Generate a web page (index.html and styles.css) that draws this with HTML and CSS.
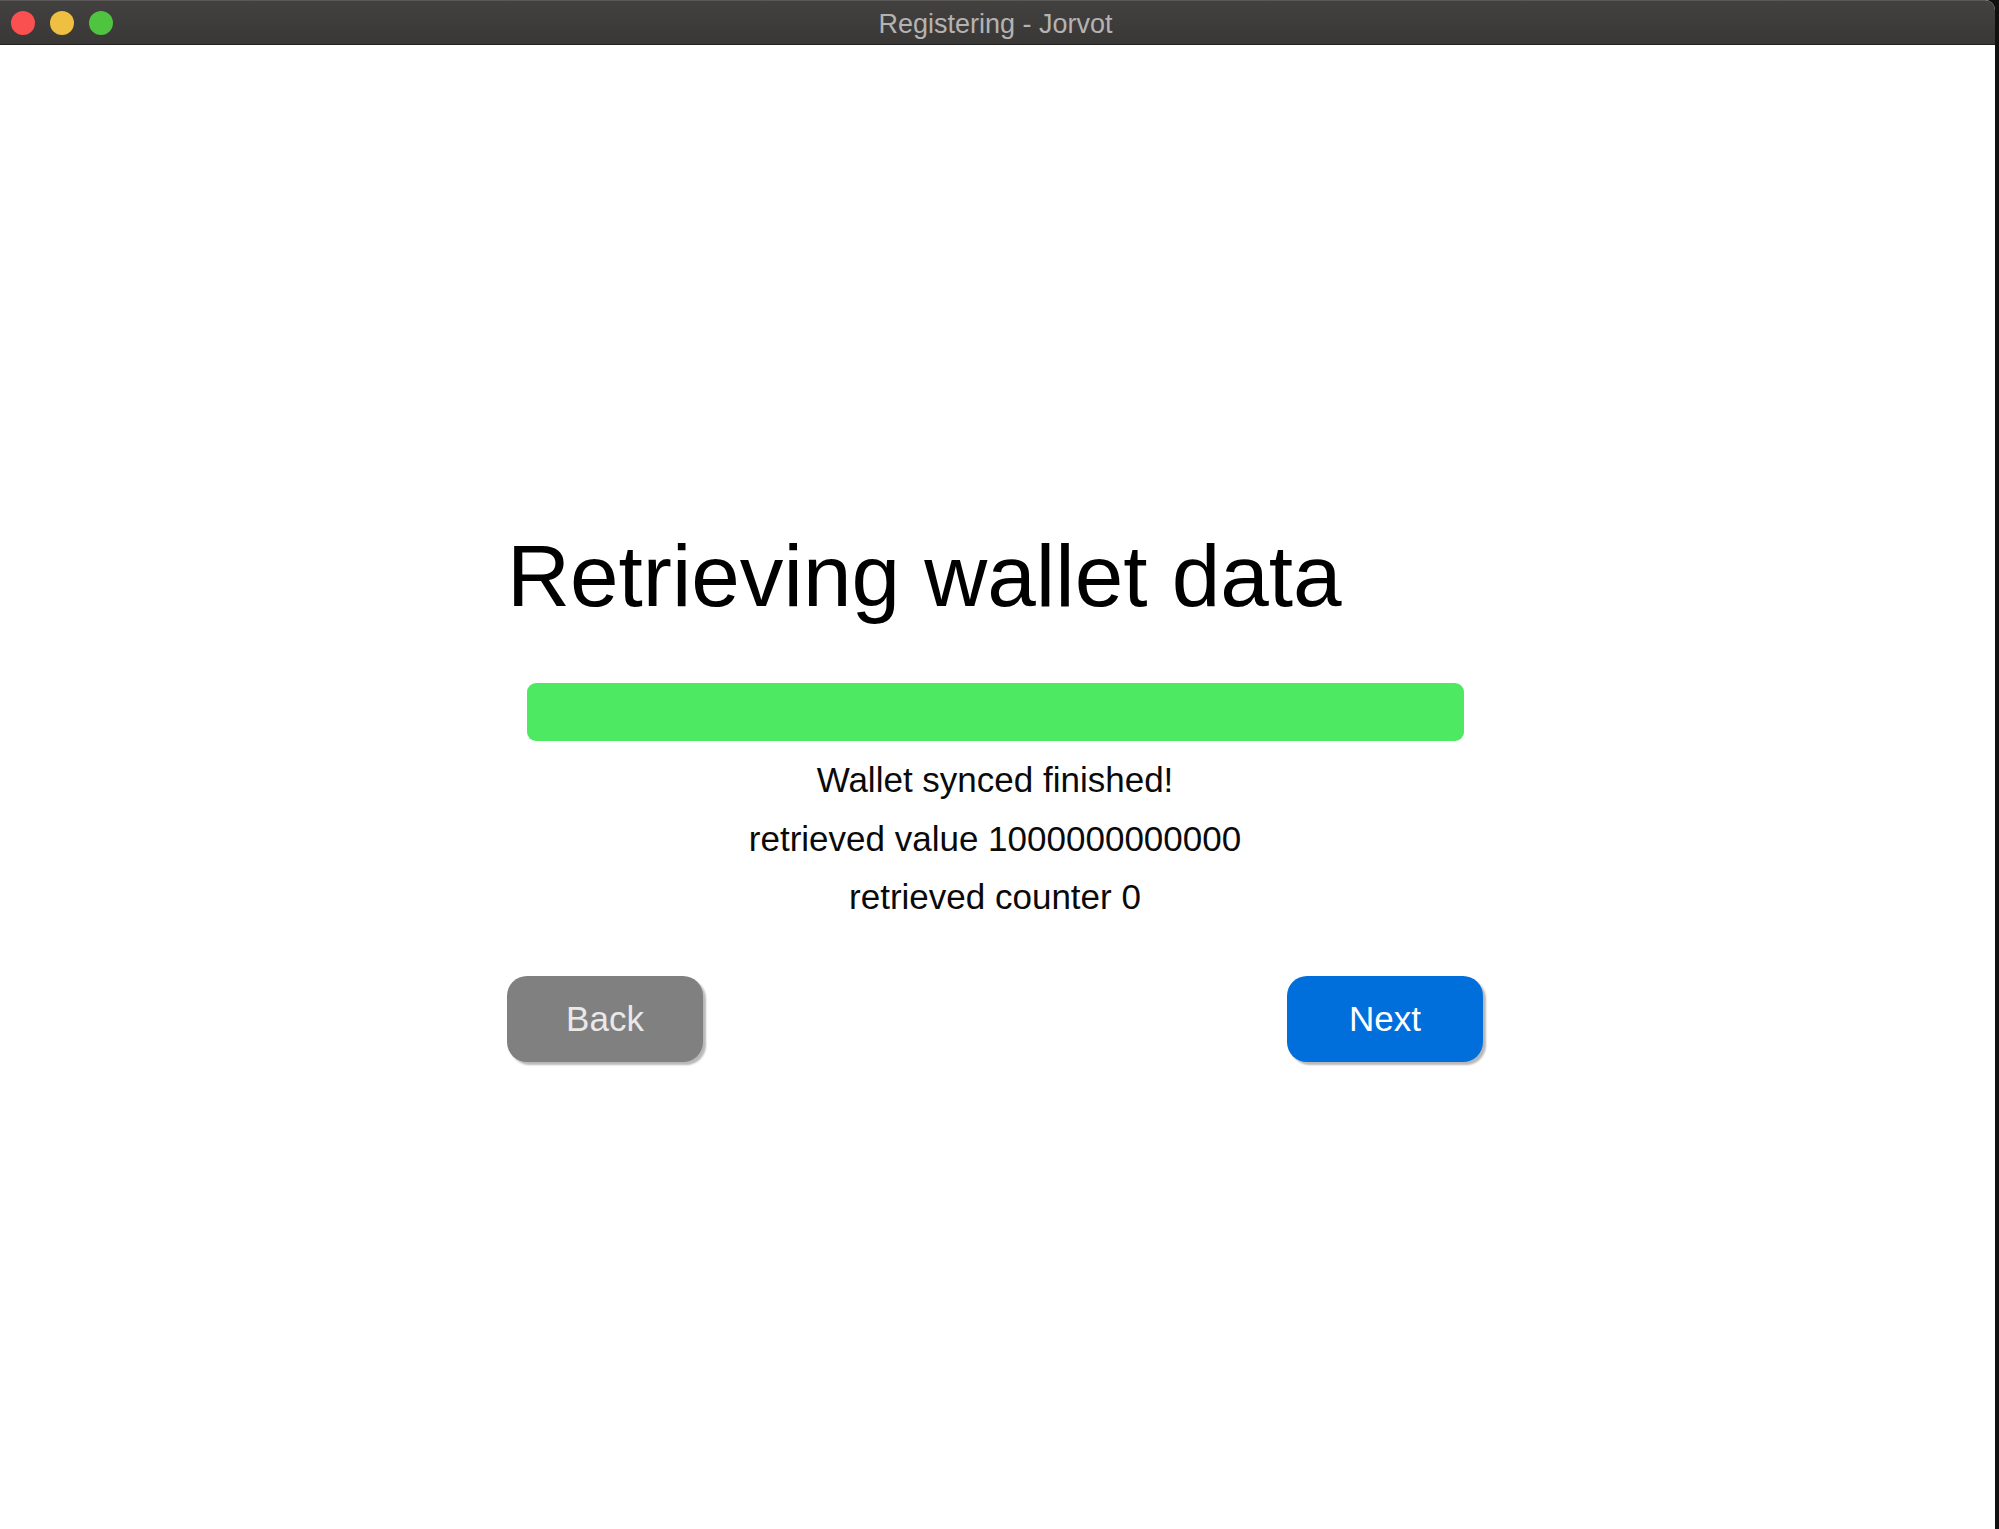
FILE: index.html
```html
<!DOCTYPE html>
<html>
<head>
<meta charset="utf-8">
<title>Registering - Jorvot</title>
<link rel="stylesheet" href="styles.css">
</head>
<body>
<div class="screen">
  <div class="window">
    <header class="titlebar">
      <div class="lights">
        <span class="light red"></span>
        <span class="light yellow"></span>
        <span class="light green"></span>
      </div>
      <div class="title">Registering - Jorvot</div>
    </header>
    <main class="content">
      <section class="column">
        <h1 class="heading">Retrieving wallet data</h1>
        <div class="progress"><div class="progress-fill" style="width:100%"></div></div>
        <div class="status">
          <p class="line">Wallet synced finished!</p>
          <p class="line">retrieved value 1000000000000</p>
          <p class="line">retrieved counter 0</p>
        </div>
        <div class="actions">
          <button class="btn btn-back">Back</button>
          <button class="btn btn-next">Next</button>
        </div>
      </section>
    </main>
  </div>
</div>
</body>
</html>
```

FILE: styles.css
```css
html, body {
  margin: 0;
  padding: 0;
  background: #111111;
}

.screen {
  width: 1999px;
  height: 1529px;
  display: flex;
  background: #111111;
  overflow: hidden;
}

.window {
  width: 1995px;
  height: 1529px;
  display: flex;
  flex-direction: column;
  background: #ffffff;
  border-top-right-radius: 10px;
  overflow: hidden;
}

.titlebar {
  height: 45px;
  flex: none;
  box-sizing: border-box;
  position: relative;
  display: flex;
  align-items: center;
  justify-content: center;
  padding-top: 3px;
  padding-right: 4px;
  background: linear-gradient(#434140, #3a3837);
  border-top: 1px solid #5a5857;
  border-bottom: 1px solid #232222;
}

.lights {
  position: absolute;
  left: 11px;
  top: 10px;
  display: flex;
  gap: 15px;
}

.light {
  width: 24px;
  height: 24px;
  border-radius: 50%;
  display: block;
}

.red { background: #fb5050; }
.yellow { background: #eebf40; }
.green { background: #4fc440; }

.title {
  font-family: "Helvetica Neue", "Liberation Sans", Arial, sans-serif;
  font-size: 27px;
  color: #b4b3b2;
  line-height: 30px;
}

.content {
  flex: 1;
  display: flex;
  flex-direction: column;
  padding-top: 481px;
}

.column {
  width: 976px;
  margin-left: 507px;
  display: flex;
  flex-direction: column;
  font-family: "Liberation Sans", Arial, Helvetica, sans-serif;
  color: #000000;
}

.heading {
  margin: 0;
  font-size: 87.3px;
  font-weight: normal;
  line-height: 100px;
}

.progress {
  margin: 57px 19px 0 20px;
  height: 58px;
  border-radius: 9px;
  overflow: hidden;
  background: #e6e6e6;
}

.progress-fill {
  height: 100%;
  background: #4de962;
}

.status {
  margin-top: 10px;
  display: flex;
  flex-direction: column;
  align-items: center;
}

.line {
  margin: 0;
  font-size: 35px;
  line-height: 58.7px;
  color: #0a0a0a;
}

.actions {
  margin-top: 49px;
  display: flex;
  justify-content: space-between;
}

.btn {
  width: 196px;
  height: 86px;
  border: none;
  border-radius: 20px;
  font-family: "Liberation Sans", Arial, Helvetica, sans-serif;
  font-size: 35px;
  padding: 0;
  box-shadow: 3px 3px 2px rgba(0, 0, 0, 0.28);
  cursor: pointer;
}

.btn-back {
  background: #808080;
  color: #e9e9e9;
}

.btn-next {
  background: #006fdc;
  color: #ffffff;
}
```
